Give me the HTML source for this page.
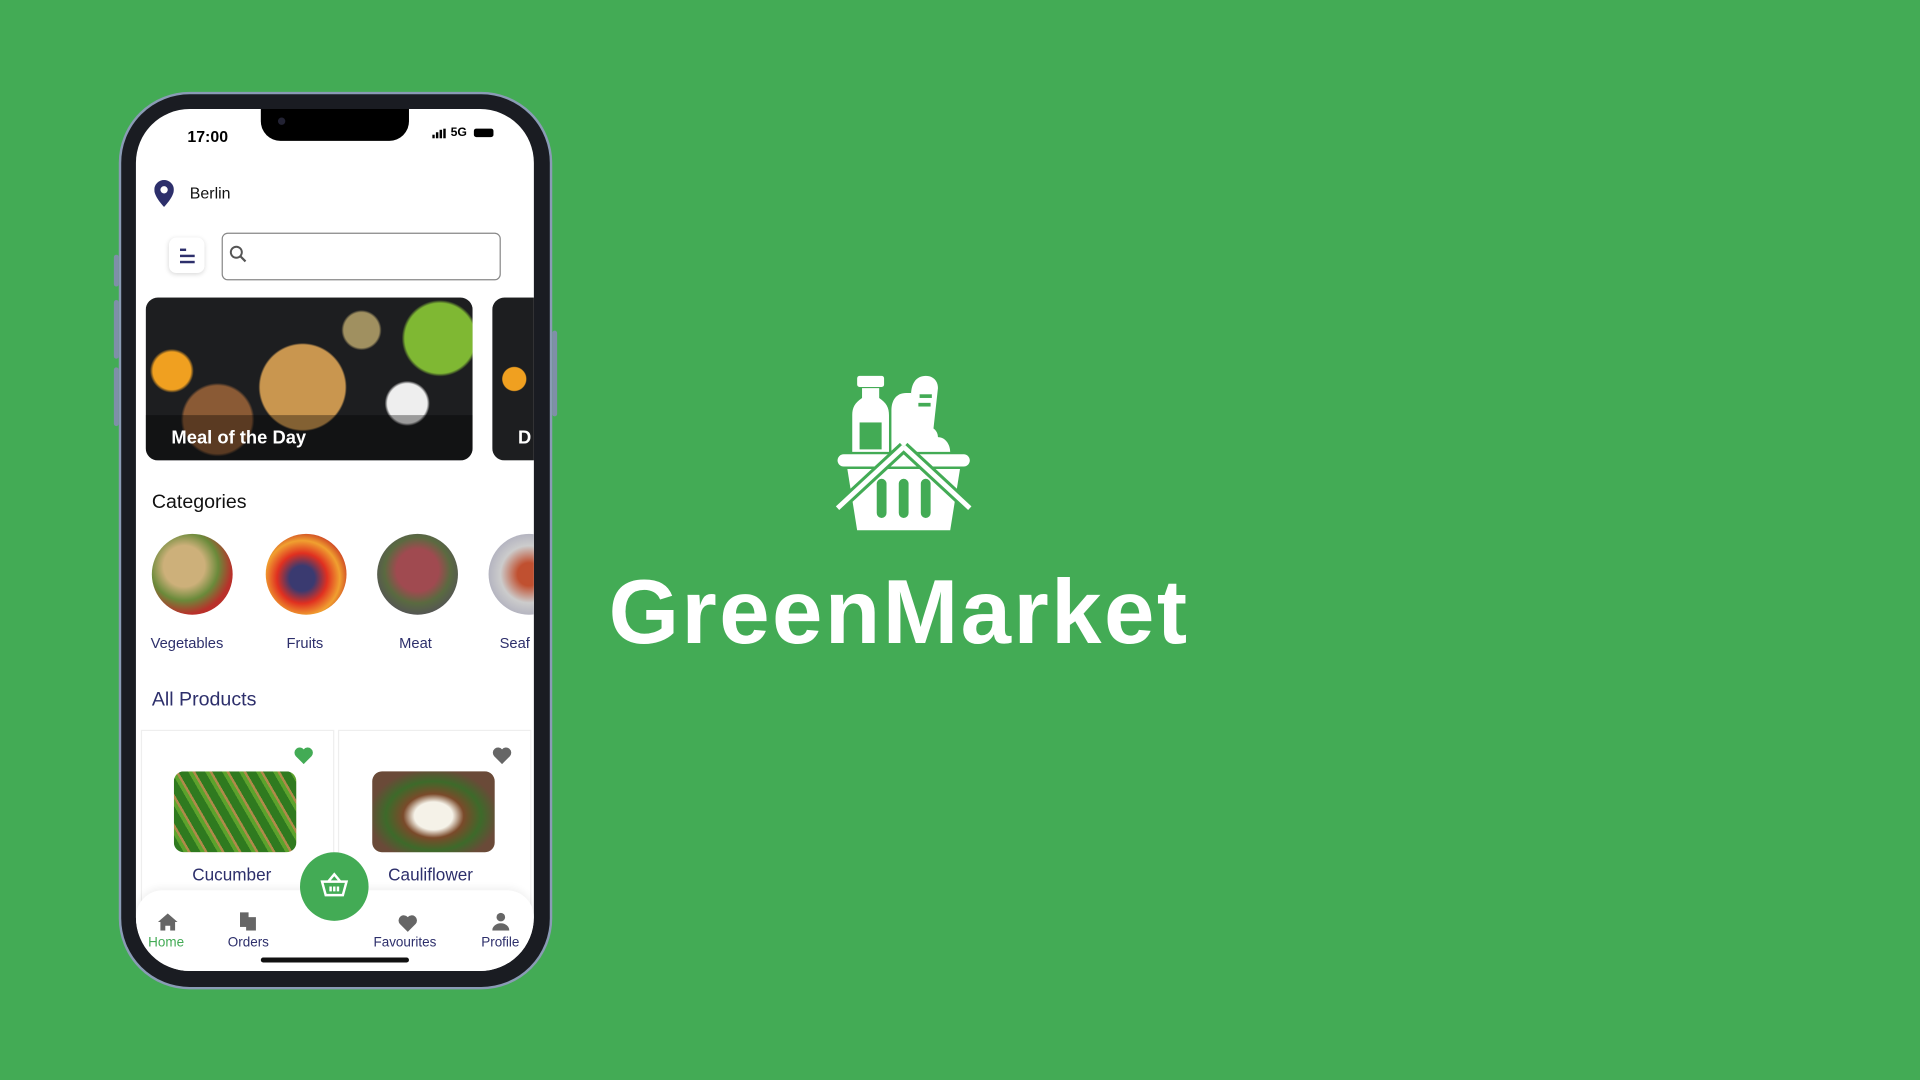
<!DOCTYPE html>
<html><head><meta charset="utf-8"><style>
html,body{margin:0;padding:0;width:1920px;height:1080px;overflow:hidden;background:#43ab55;}
#s{position:absolute;left:0;top:0;width:1568px;height:882px;transform:scale(1.22449);transform-origin:0 0;font-family:"Liberation Sans",sans-serif;}
.a{position:absolute;}
.t{color:#2d2f6b;font-size:12px;}
.circ{border-radius:50%;width:66px;height:66px;top:436px;}
</style></head><body><div id="s">
<div class="a" style="left:97px;top:75px;width:354px;height:733px;border-radius:58px;background:#1a1c22;border:2px solid #8a9bb5;box-sizing:border-box;"></div>
<div class="a" style="left:93px;top:208px;width:4px;height:26px;background:#7f8fa8;border-radius:2px"></div>
<div class="a" style="left:93px;top:245px;width:4px;height:48px;background:#7f8fa8;border-radius:2px"></div>
<div class="a" style="left:93px;top:300px;width:4px;height:48px;background:#7f8fa8;border-radius:2px"></div>
<div class="a" style="left:451px;top:270px;width:4px;height:70px;background:#7f8fa8;border-radius:2px"></div>
<div class="a" style="left:111px;top:89px;width:325px;height:704px;border-radius:44px;background:#fff;overflow:hidden;">
  <div class="a" style="left:102px;top:0;width:121px;height:26px;background:#000;border-radius:0 0 16px 16px"></div>
  <div class="a" style="left:116px;top:7px;width:6px;height:6px;background:#223;border-radius:50%"></div>
  <div class="a" style="left:42px;top:15px;font-weight:bold;font-size:13px;color:#000">17:00</div>
  <svg class="a" style="left:242px;top:16px" width="12" height="8"><rect x="0" y="5" width="2" height="3"/><rect x="3" y="3" width="2" height="5"/><rect x="6" y="1" width="2" height="7"/><rect x="9" y="0" width="2" height="8"/></svg>
  <div class="a" style="left:257px;top:14px;font-weight:bold;font-size:10px;color:#000">5G</div>
  <div class="a" style="left:276px;top:16px;width:16px;height:7px;background:#000;border-radius:2px"></div>
  <svg class="a" style="left:15px;top:58px" width="16" height="22" viewBox="0 0 16 22"><path d="M8 0a8 8 0 0 0-8 8c0 6 8 14 8 14s8-8 8-14a8 8 0 0 0-8-8zm0 5a3 3 0 1 1 0 6 3 3 0 0 1 0-6z" fill="#2d2f6b"/></svg>
  <div class="a" style="left:44px;top:61px;font-size:13px;color:#111">Berlin</div>
  <div class="a" style="left:27px;top:105px;width:29px;height:29px;border-radius:6px;box-shadow:0 1px 4px rgba(0,0,0,.15);background:#fff"></div>
  <div class="a" style="left:36px;top:114px;width:5px;height:2px;background:#2d2f6b"></div>
  <div class="a" style="left:36px;top:119px;width:12px;height:2px;background:#2d2f6b"></div>
  <div class="a" style="left:36px;top:124px;width:12px;height:2px;background:#2d2f6b"></div>
  <div class="a" style="left:70px;top:101px;width:226px;height:37px;border:1px solid #888;border-radius:5px;"></div>
  <svg class="a" style="left:76px;top:111px" width="16" height="16"><circle cx="6" cy="6" r="4.5" stroke="#555" stroke-width="1.6" fill="none"/><path d="M9.5 9.5l4 4" stroke="#555" stroke-width="1.8"/></svg>
  <div class="a" style="left:8px;top:154px;width:267px;height:133px;border-radius:10px;overflow:hidden;background:radial-gradient(circle at 48% 55%,#c9964f 0 22%,transparent 23%),radial-gradient(circle at 90% 25%,#7fb833 0 11%,transparent 12%),radial-gradient(circle at 8% 45%,#f0a020 0 6%,transparent 7%),radial-gradient(circle at 22% 75%,#8a5a35 0 12%,transparent 13%),radial-gradient(circle at 80% 65%,#eee 0 7%,transparent 8%),radial-gradient(circle at 66% 20%,#a09060 0 7%,transparent 8%),radial-gradient(circle at 40% 57%,#cc2a1a 0 6%,transparent 7%),#1d1e20;">
    <div class="a" style="left:0;bottom:0;width:100%;height:37px;background:rgba(0,0,0,.35)"></div>
    <div class="a" style="left:21px;top:106px;color:#fff;font-size:15px;font-weight:bold">Meal of the Day</div>
  </div>
  <div class="a" style="left:291px;top:154px;width:60px;height:133px;border-radius:10px;background:radial-gradient(circle at 30% 50%,#f0a020 0 12%,transparent 13%),#1d1e20"><div class="a" style="left:21px;top:106px;color:#fff;font-size:15px;font-weight:bold">D</div></div>
  <div class="a" style="left:13px;top:313px;font-size:16px;color:#111">Categories</div>
  <div class="a circ" style="left:13px;top:347px;background:radial-gradient(circle at 40% 40%,#cdb07a 0 30%,#6a8a3a 50%,#b9302a 70%)"></div>
  <div class="a circ" style="left:106px;top:347px;background:radial-gradient(circle at 45% 55%,#3a3a70 0 20%,#e03020 40%,#f0a030 60%,#c02020 80%)"></div>
  <div class="a circ" style="left:197px;top:347px;background:radial-gradient(circle at 50% 45%,#a04a50 0 35%,#5a6a40 55%,#555 75%)"></div>
  <div class="a circ" style="left:288px;top:347px;background:radial-gradient(circle at 50% 50%,#c05030 0 20%,#ccc 50%,#aab 80%)"></div>
  <div class="a t" style="left:12px;top:429px">Vegetables</div>
  <div class="a t" style="left:123px;top:429px">Fruits</div>
  <div class="a t" style="left:215px;top:429px">Meat</div>
  <div class="a t" style="left:297px;top:429px">Seaf</div>
  <div class="a" style="left:13px;top:474px;font-size:16px;color:#2d2f6b">All Products</div>
  <div class="a" style="left:4px;top:507px;width:156px;height:150px;border:1px solid #eee"></div>
  <div class="a" style="left:165px;top:507px;width:156px;height:150px;border:1px solid #eee"></div>
  <svg class="a" style="left:129px;top:521px" width="16" height="14" viewBox="0 0 16 14"><path d="M8 14L1.5 7.5A4 4 0 0 1 8 2a4 4 0 0 1 6.5 5.5z" fill="#43ab55"/></svg>
  <svg class="a" style="left:291px;top:521px" width="16" height="14" viewBox="0 0 16 14"><path d="M8 14L1.5 7.5A4 4 0 0 1 8 2a4 4 0 0 1 6.5 5.5z" fill="#666"/></svg>
  <div class="a" style="left:31px;top:541px;width:100px;height:66px;border-radius:8px;background:repeating-linear-gradient(60deg,#2f7a1f 0 7px,#5ca32c 7px 10px,#b08a4a 10px 12px),#b08a4a"></div>
  <div class="a" style="left:193px;top:541px;width:100px;height:66px;border-radius:8px;background:radial-gradient(ellipse at 50% 55%,#f5f2e8 0 22%,#7a4a2a 35%,#3d6a2a 55%,#6a4a38 75%)"></div>
  <div class="a" style="left:46px;top:617px;font-size:14px;color:#2d2f6b">Cucumber</div>
  <div class="a" style="left:206px;top:617px;font-size:14px;color:#2d2f6b">Cauliflower</div>
  <div class="a" style="left:0;top:638px;width:325px;height:70px;background:#fff;border-radius:22px 22px 0 0;box-shadow:0 -2px 6px rgba(0,0,0,.06)"></div>
  <div class="a" style="left:134px;top:607px;width:56px;height:56px;border-radius:50%;background:#43ab55"></div>
  <svg class="a" style="left:150px;top:622px" width="24" height="24" viewBox="0 0 24 24" fill="none" stroke="#fff" stroke-width="2"><path d="M7 9l5-6 5 6M2 9h20l-3 11H5z M9 13v4M12 13v4M15 13v4"/></svg>
  <svg class="a" style="left:18px;top:657px" width="16" height="14"><path d="M8 0L0 7h2v7h4v-4h4v4h4V7h2z" fill="#666"/></svg>
  <svg class="a" style="left:85px;top:656px" width="14" height="15"><rect x="0" y="0" width="7" height="12" fill="#666"/><rect x="5" y="4" width="8" height="11" fill="#666"/></svg>
  <svg class="a" style="left:214px;top:658px" width="16" height="14" viewBox="0 0 16 14"><path d="M8 14L1.5 7.5A4 4 0 0 1 8 2a4 4 0 0 1 6.5 5.5z" fill="#666"/></svg>
  <svg class="a" style="left:291px;top:656px" width="14" height="15"><circle cx="7" cy="4" r="3.5" fill="#666"/><path d="M0 15a7 6 0 0 1 14 0z" fill="#666"/></svg>
  <div class="a" style="left:10px;top:675px;font-size:11px;color:#43ab55">Home</div>
  <div class="a" style="left:75px;top:675px;font-size:11px;color:#2d2f6b">Orders</div>
  <div class="a" style="left:194px;top:675px;font-size:11px;color:#2d2f6b">Favourites</div>
  <div class="a" style="left:282px;top:675px;font-size:11px;color:#2d2f6b">Profile</div>
  <div class="a" style="left:102px;top:693px;width:121px;height:4px;border-radius:2px;background:#111"></div>
</div>
<svg class="a" style="left:680px;top:303px" width="116" height="132" viewBox="0 0 116 132" fill="#fff">
  <rect x="20" y="4" width="22" height="9" rx="2"/>
  <path d="M24 14h14v8c6 4 8 8 8 14v30H16V36c0-6 2-10 8-14z"/>
  <rect x="22" y="42" width="18" height="22" fill="#43ab55"/>
  <path d="M48 32c0-8 4-14 12-14l4 0v48H48z"/>
  <path d="M64 20c0-12 6-16 12-16s10 4 10 10l-4 36H62z"/>
  <rect x="71" y="19" width="10" height="3" fill="#43ab55"/><rect x="70" y="26" width="10" height="3" fill="#43ab55"/>
  <path d="M52 50c4-8 14-8 18-2 6-6 16-2 16 6 6 0 10 6 10 12H50z"/>
  <rect x="4" y="68" width="108" height="10" rx="5"/>
  <path d="M12 80h92l-8 50H20z"/>
  <g fill="#43ab55"><rect x="36" y="88" width="8" height="32" rx="4"/><rect x="54" y="88" width="8" height="32" rx="4"/><rect x="72" y="88" width="8" height="32" rx="4"/></g>
  <path d="M58 62L4 112" stroke="#43ab55" stroke-width="9"/><path d="M58 62L112 112" stroke="#43ab55" stroke-width="9"/>
  <path d="M58 62L4 112" stroke="#fff" stroke-width="4"/><path d="M58 62L112 112" stroke="#fff" stroke-width="4"/>
</svg>
<div class="a" style="left:497px;top:455px;font-size:74px;font-weight:bold;color:#fff;letter-spacing:2px;line-height:90px">GreenMarket</div>
</div></body></html>
